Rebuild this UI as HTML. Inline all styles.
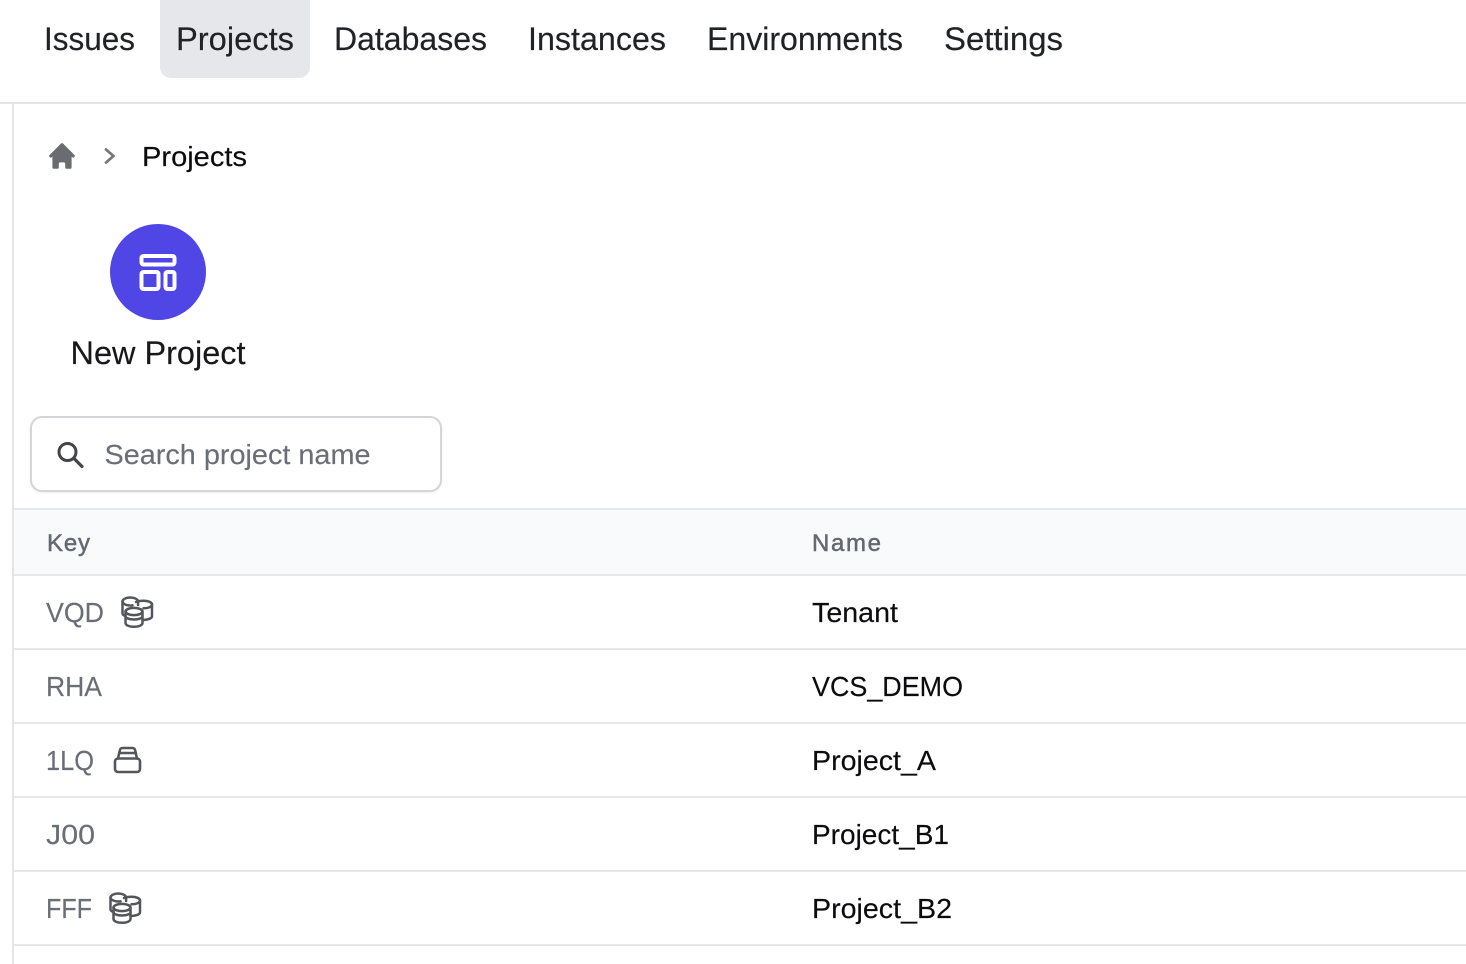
<!DOCTYPE html>
<html lang="en">
<head>
<meta charset="utf-8">
<title>Projects</title>
<style>
html,body{margin:0;padding:0;background:#fff;width:1466px;height:964px;overflow:hidden}
svg{display:block}
text{font-family:"Liberation Sans",sans-serif}
.nav{font-size:32px;fill:#202226;stroke:#202226;stroke-width:.15px}
.row{font-size:28px;fill:#0c0c0e;stroke:#0c0c0e;stroke-width:.15px}
.key{font-size:28px;fill:#6b6e76;stroke:#6b6e76;stroke-width:.15px}
.th{font-size:24px;fill:#646873;stroke:#646873;stroke-width:.5px}
.ic{fill:none;stroke:#55565b;stroke-width:2.500;stroke-linecap:round;stroke-linejoin:round}
</style>
</head>
<body>
<svg width="1466" height="964" viewBox="0 0 1466 964" xmlns="http://www.w3.org/2000/svg">
<defs>
<filter id="s" x="-5%" y="-10%" width="110%" height="125%"><feDropShadow dx="0" dy="1" stdDeviation="1" flood-color="#000" flood-opacity=".07"/></filter>
</defs>
<rect width="1466" height="964" fill="#fff"/>

<!-- nav -->
<rect x="160" y="-12" width="150" height="90" rx="11" fill="#e6e7ea"/>
<text class="nav" x="44" y="50" textLength="91" lengthAdjust="spacingAndGlyphs">Issues</text>
<text class="nav" x="176" y="50" textLength="118" lengthAdjust="spacingAndGlyphs">Projects</text>
<text class="nav" x="334" y="50" textLength="153" lengthAdjust="spacingAndGlyphs">Databases</text>
<text class="nav" x="528" y="50" textLength="138" lengthAdjust="spacingAndGlyphs">Instances</text>
<text class="nav" x="707" y="50" textLength="196" lengthAdjust="spacingAndGlyphs">Environments</text>
<text class="nav" x="944" y="50" textLength="119" lengthAdjust="spacingAndGlyphs">Settings</text>
<rect x="0" y="102" width="1466" height="2" fill="#e5e5e7"/>
<rect x="12" y="104" width="2" height="860" fill="#e5e5e7"/>

<!-- breadcrumb -->
<path transform="translate(46 140) scale(1.6)" fill="#6b6c72" d="M10.707 2.293a1 1 0 00-1.414 0l-7 7a1 1 0 001.414 1.414L4 10.414V17a1 1 0 001 1h2a1 1 0 001-1v-2a1 1 0 011-1h2a1 1 0 011 1v2a1 1 0 001 1h2a1 1 0 001-1v-6.586l.293.293a1 1 0 001.414-1.414l-7-7z"/>
<path d="M106 149.500l7.500 6.500-7.500 6.500" fill="none" stroke="#77787c" stroke-width="2.800" stroke-linecap="round" stroke-linejoin="round"/>
<text class="row" x="142" y="166" textLength="105" lengthAdjust="spacingAndGlyphs">Projects</text>

<!-- new project -->
<circle cx="158" cy="272" r="48" fill="#4f46e5"/>
<g fill="none" stroke="#fff" stroke-width="4" stroke-linejoin="round">
<rect x="141.500" y="256" width="33" height="8.500" rx="2"/>
<rect x="141.500" y="272" width="17" height="17" rx="2"/>
<rect x="165.500" y="272" width="9" height="17" rx="2"/>
</g>
<text x="70.500" y="364" font-size="32" fill="#18181b" stroke="#18181b" stroke-width=".15" textLength="175" lengthAdjust="spacingAndGlyphs">New Project</text>

<!-- search -->
<rect x="31" y="417" width="410" height="74" rx="11" fill="#fff" stroke="#d4d5d8" stroke-width="2" filter="url(#s)"/>
<circle cx="67.500" cy="452" r="8.500" fill="none" stroke="#444549" stroke-width="3"/>
<path d="M74 458.500l8 8" stroke="#444549" stroke-width="3.200" stroke-linecap="round"/>
<text x="104.500" y="464" font-size="28" fill="#6b6e76" stroke="#6b6e76" stroke-width=".15" textLength="266" lengthAdjust="spacingAndGlyphs">Search project name</text>

<!-- table header -->
<rect x="14" y="509" width="1452" height="66" fill="#f9fafb"/>
<rect x="14" y="508" width="1452" height="2" fill="#e5e7eb"/>
<rect x="14" y="574" width="1452" height="2" fill="#e5e7eb"/>
<text class="th" x="47" y="551" textLength="43" lengthAdjust="spacing">Key</text>
<text class="th" x="812" y="551" textLength="69" lengthAdjust="spacing">Name</text>

<!-- rows -->
<rect x="14" y="648" width="1452" height="2" fill="#e5e7eb"/>
<rect x="14" y="722" width="1452" height="2" fill="#e5e7eb"/>
<rect x="14" y="796" width="1452" height="2" fill="#e5e7eb"/>
<rect x="14" y="870" width="1452" height="2" fill="#e5e7eb"/>
<rect x="14" y="944" width="1452" height="2" fill="#e5e7eb"/>

<text class="key" x="46" y="622" textLength="58" lengthAdjust="spacingAndGlyphs">VQD</text>
<text class="row" x="812" y="622" textLength="86" lengthAdjust="spacingAndGlyphs">Tenant</text>
<text class="key" x="46" y="696" textLength="56" lengthAdjust="spacingAndGlyphs">RHA</text>
<text class="row" x="812" y="696" textLength="151" lengthAdjust="spacingAndGlyphs">VCS_DEMO</text>
<text class="key" x="46" y="770" textLength="48" lengthAdjust="spacingAndGlyphs">1LQ</text>
<text class="row" x="812" y="770" textLength="124" lengthAdjust="spacingAndGlyphs">Project_A</text>
<text class="key" x="46" y="844" textLength="49" lengthAdjust="spacingAndGlyphs">J00</text>
<text class="row" x="812" y="844" textLength="137" lengthAdjust="spacingAndGlyphs">Project_B1</text>
<text class="key" x="46" y="918" textLength="46" lengthAdjust="spacingAndGlyphs">FFF</text>
<text class="row" x="812" y="918" textLength="140" lengthAdjust="spacingAndGlyphs">Project_B2</text>

<!-- tenant icon: VQD -->
<g class="ic">
<path d="M125.500 616c-2-.6-3-1.500-3-2.800V601.500c0-2.200 3.500-4 7.800-4s7.800 1.800 7.800 4v3.500"/>
<path d="M122.500 601.500c0 2.200 3.500 4 7.800 4 .8 0 1.500 0 2.200-.2"/>
<path d="M136 602c2-.9 4-1.200 7.500-1.200 4.800 0 8.500 1.500 8.500 3.700v11.800c0 1.800-3 3.300-8.500 3.700"/>
<path d="M152 604.500c0 2.200-3.700 3.800-8.500 3.800"/>
<ellipse cx="134" cy="611.500" rx="8.500" ry="3.600"/>
<path d="M125.500 611.500v11.500c0 2.200 3.800 3.800 8.500 3.800s8.500-1.600 8.500-3.800v-11.500"/>
<path d="M125.500 616c0 2.200 3.800 3.500 8.500 3.500s8.500-1.300 8.500-3.500"/>
</g>
<!-- tenant icon: FFF -->
<g class="ic" transform="translate(-12 296)">
<path d="M125.500 616c-2-.6-3-1.500-3-2.800V601.500c0-2.200 3.500-4 7.800-4s7.800 1.800 7.800 4v3.500"/>
<path d="M122.500 601.500c0 2.200 3.500 4 7.800 4 .8 0 1.500 0 2.200-.2"/>
<path d="M136 602c2-.9 4-1.200 7.500-1.200 4.800 0 8.500 1.500 8.500 3.700v11.800c0 1.800-3 3.300-8.500 3.700"/>
<path d="M152 604.500c0 2.200-3.700 3.800-8.500 3.800"/>
<ellipse cx="134" cy="611.500" rx="8.500" ry="3.600"/>
<path d="M125.500 611.500v11.500c0 2.200 3.800 3.800 8.500 3.800s8.500-1.600 8.500-3.800v-11.500"/>
<path d="M125.500 616c0 2.200 3.800 3.500 8.500 3.500s8.500-1.300 8.500-3.500"/>
</g>
<!-- single db icon: 1LQ -->
<g class="ic" style="stroke-width:2.600">
<rect x="115" y="758.500" width="25" height="13.500" rx="3"/>
<path d="M118 758.500l1.800-8c.3-1.500 1.200-2.500 2.700-2.500h10c1.500 0 2.400 1 2.700 2.500l1.800 8"/>
<path d="M119.500 753h16"/>
</g>
</svg>
</body>
</html>
